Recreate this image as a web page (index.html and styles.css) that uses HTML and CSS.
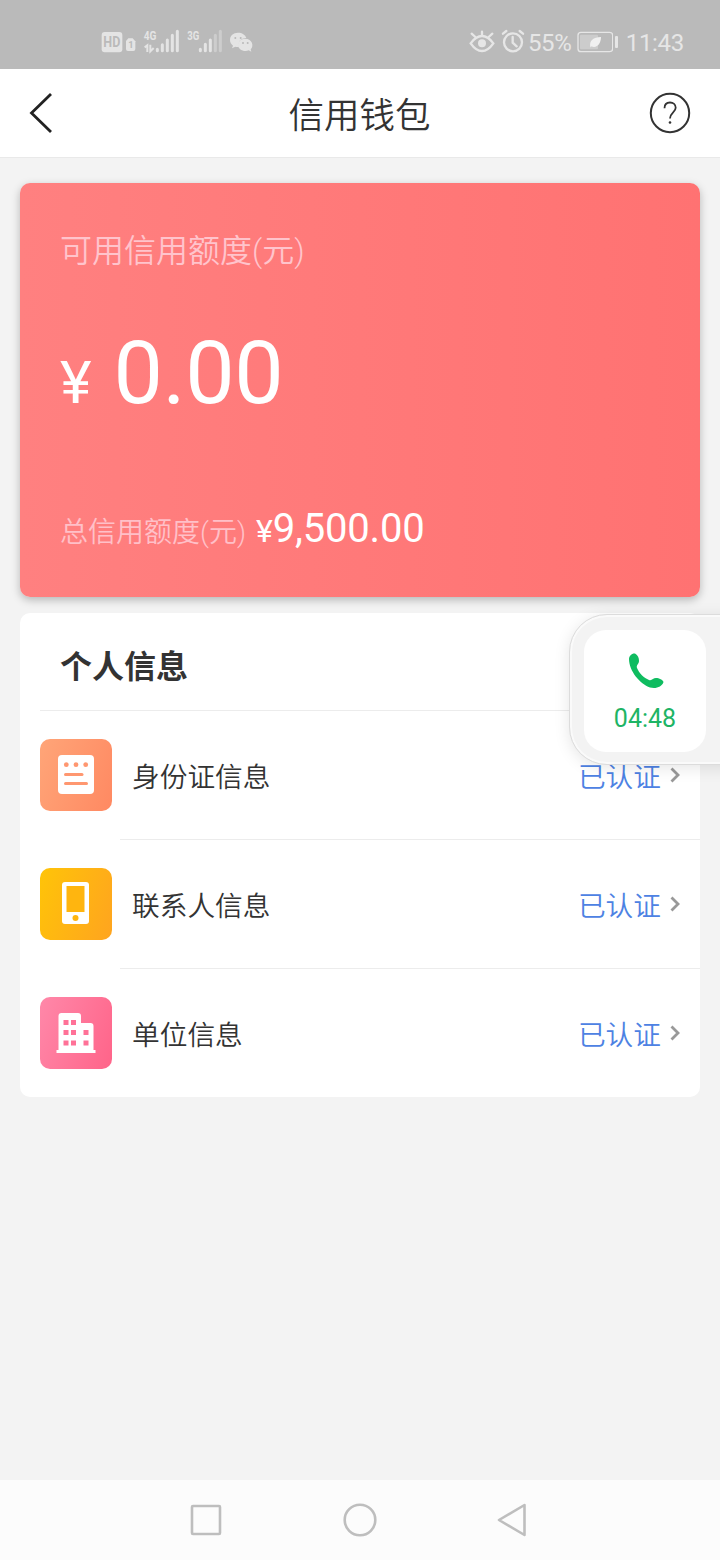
FILE: index.html
```html
<!DOCTYPE html>
<html lang="zh-CN">
<head>
<meta charset="utf-8">
<title>信用钱包</title>
<link rel="stylesheet" href="styles.css">
</head>
<body>
<div class="screen">
  <div class="status-bar">
    <svg class="status-network" width="180" height="45" viewBox="0 0 540 135">
      <rect x="35" y="36" width="62" height="61" rx="9" fill="#e4e4e4"/>
      <text x="40" y="81" class="badge-text" textLength="51" lengthAdjust="spacingAndGlyphs">HD</text>
      <path d="M115 55H128L136 64V87Q136 93 130 93H114Q108 93 108 87V63Z" fill="#e4e4e4"/>
      <text x="115" y="85" class="sim-text">1</text>
      <text x="161" y="60" class="net-text" textLength="38" lengthAdjust="spacingAndGlyphs">4G</text>
      <text x="292" y="60" class="net-text" textLength="36" lengthAdjust="spacingAndGlyphs">3G</text>
      <path d="M164 82L172 76V96M181 74V94L191 84" fill="none" stroke="#e4e4e4" stroke-width="6"/>
      <g stroke="#e4e4e4" stroke-width="9" stroke-linecap="round">
        <path d="M202 88V92M217 74V92M232 60V92M247 46V92M262 34V92M331 88V92M346 73V92M361 60V92"/>
        <path d="M376 46V92M391 34V92" stroke="#cdcdcd"/>
      </g>
      <path d="M444 38C430 38 420 47 420 60C420 67 424 73 429 77L426 85L436 80Q441 82 447 81C441 65 455 53 469 54C466 44 456 38 444 38Z" fill="#e4e4e4"/>
      <path d="M466 56C453 56 444 64 444 74C444 84 454 93 467 93Q472 93 476 91L484 95L482 88C493 77 486 56 466 56Z" fill="#e4e4e4"/>
      <g fill="#bababa"><circle cx="436" cy="54" r="3"/><circle cx="452" cy="54" r="3"/><circle cx="459" cy="69" r="3"/><circle cx="473" cy="69" r="3"/></g>
    </svg>
    <div class="status-right">
      <svg width="66" height="45" viewBox="0 0 198 135" fill="none" stroke="#e6e6e6" stroke-width="7" stroke-linecap="round">
        <path d="M32 70Q48 48 66 48T100 70Q84 93 66 93T32 70ZM66 45V35M46 51L35 41M86 51L97 41"/>
        <circle cx="66" cy="70" r="12" fill="#e6e6e6" stroke="none"/>
        <circle cx="159" cy="67" r="27"/><path d="M158 51V68L170 79M129 41L139 33M189 41L179 33"/>
      </svg>
      <span class="battery-value">55%</span>
      <svg width="42" height="45" viewBox="0 0 126 135">
        <rect x="21" y="37" width="104" height="58" rx="9" fill="none" stroke="#e6e6e6" stroke-width="4"/>
        <rect x="27" y="44" width="54" height="44" rx="3" fill="#cccccc"/>
        <path d="M58 82C54 61 67 52 90 51C90 70 78 86 61 79L75 64L57 83Z" fill="#f0f0f0"/>
      </svg>
      <span class="battery-cap"></span>
      <span class="clock">11:43</span>
    </div>
  </div>

  <header class="title-bar">
    <svg width="24" height="42" viewBox="0 0 24 42"><path d="M22 2L2.500 21L22 40" fill="none" stroke="#222" stroke-width="2.8"/></svg>
    <h1 class="title">信用钱包</h1>
    <svg width="42" height="42" viewBox="0 0 42 42" fill="none" stroke="#333" stroke-width="2">
      <circle cx="21" cy="21" r="19.2"/>
      <path d="M15.500 16.200C15.500 12.400 17.800 10.500 21 10.500S26.700 12.600 26.700 15.800C26.700 20.200 21 20.700 21 26.500" stroke-width="1.800"/><circle cx="21" cy="30.500" r="1.300" fill="#333" stroke="none"/>
    </svg>
  </header>

  <main class="content">
    <section class="credit-card">
      <div class="available-label">可用信用额度(元)</div>
      <div class="available-amount"><span class="available-yen">¥</span><span class="available-number">0.00</span></div>
      <div class="total"><span class="total-label">总信用额度(元)</span><span class="total-yen">¥</span><span class="total-number">9,500.00</span></div>
    </section>

    <section class="info-card">
      <h2 class="info-title">个人信息</h2>
      <div class="row">
        <div class="icon icon-id"><svg width="72" height="72" viewBox="0 0 72 72">
          <rect x="18" y="16" width="36" height="39" rx="4" fill="#fff"/>
          <g fill="#ff9770"><circle cx="26.3" cy="25.7" r="2.4"/><circle cx="36" cy="25.7" r="2.4"/><circle cx="45.7" cy="25.7" r="2.4"/><rect x="24" y="34" width="19.5" height="3" rx="1.5"/><rect x="24" y="43" width="24" height="3" rx="1.5"/></g>
        </svg></div>
        <div class="row-body"><span class="name">身份证信息</span><span class="state">已认证</span><svg class="arrow" width="12" height="18" viewBox="0 0 12 18"><path d="M2.5 2.5L9 9L2.5 15.5"/></svg></div>
      </div>
      <div class="row">
        <div class="icon icon-contact"><svg width="72" height="72" viewBox="0 0 72 72">
          <rect x="22" y="14" width="27" height="42" rx="3" fill="#fff"/><rect x="26.5" y="18" width="18" height="26" fill="#ffb50f"/><circle cx="35.5" cy="50" r="3" fill="#ffb50f"/>
        </svg></div>
        <div class="row-body"><span class="name">联系人信息</span><span class="state">已认证</span><svg class="arrow" width="12" height="18" viewBox="0 0 12 18"><path d="M2.5 2.5L9 9L2.5 15.5"/></svg></div>
      </div>
      <div class="row">
        <div class="icon icon-company"><svg width="72" height="72" viewBox="0 0 72 72">
          <path d="M18.5 53V19Q18.5 16 21.500 16H38Q41 16 41 19V26H50.500Q53.500 26 53.500 29V53H55.500V56H16.500V53Z" fill="#fff"/>
          <g fill="#ff7197"><path d="M23.500 23h5v5h-5zM31 23h5v5h-5zM23.500 33h5v5h-5zM31 33h5v5h-5zM43.500 33h5v5h-5zM23.500 43.500h5v5h-5zM31 43.500h5v5h-5zM43.500 43.500h5v5h-5z"/></g>
        </svg></div>
        <div class="row-body"><span class="name">单位信息</span><span class="state">已认证</span><svg class="arrow" width="12" height="18" viewBox="0 0 12 18"><path d="M2.5 2.5L9 9L2.5 15.5"/></svg></div>
      </div>
    </section>
  </main>

  <nav class="nav-bar">
    <svg width="34" height="36" viewBox="0 0 34 36"><rect x="3" y="4" width="28" height="28" rx="1"/></svg>
    <svg width="36" height="36" viewBox="0 0 36 36"><circle cx="19" cy="18" r="15.300"/></svg>
    <svg width="34" height="36" viewBox="0 0 34 36"><path d="M29.500 3V33L4 18Z" stroke-linejoin="round"/></svg>
  </nav>

  <div class="call-float">
    <div class="call-tile">
      <svg width="36" height="36" viewBox="0 0 36 36"><path d="M1 6C1 3 4 0 7 .5C10 2 11 5 11 8C11 11 8 12 9 15C11 20 16 25 21 27C24 28 25 25 28 25C31 25 35 27 35.500 29C34 34 28 36 22 34.500C12 31 1 18 1 6Z" fill="#0fbc60"/></svg>
      <span class="call-time">04:48</span>
    </div>
  </div>
</div>
</body>
</html>
```
FILE: styles.css
```css
* { box-sizing: border-box; }
body { margin: 0; font-family: Roboto, "Noto Sans CJK SC", sans-serif; color: #333; }
svg { display: block; flex: none; }
.screen { position: relative; width: 720px; height: 1560px; overflow: hidden; display: flex; flex-direction: column; background: #f3f3f3; }

.status-bar { height: 69px; flex: none; padding: 20px 36px 0 90px; display: flex; justify-content: space-between; background: #bababa; color: #e6e6e6; }
.badge-text { font: bold 42px Roboto, sans-serif; fill: #bababa; }
.sim-text { font: bold 28px Roboto, sans-serif; fill: #bababa; }
.net-text { font: bold 40px Roboto, sans-serif; fill: #e4e4e4; }
.status-right { display: flex; font-size: 24px; line-height: 46px; width: 224px; }
.battery-value { width: 44px; margin-left: 2px; letter-spacing: -0.4px; }
.battery-cap { width: 3px; height: 12px; margin: 16px 8px 0 2px; background: #e6e6e6; border-radius: 1px; }
.clock { white-space: nowrap; letter-spacing: -0.3px; }

.title-bar { height: 89px; flex: none; padding: 0 29px; display: flex; align-items: center; justify-content: space-between; background: #fff; border-bottom: 1px solid #e9e9e9; }
.title { margin: 6px 0 0 17px; font-size: 35.5px; font-weight: 350; line-height: 50px; color: #333; }

.content { flex: 1; padding: 25px 20px 0; }
.credit-card { height: 414px; padding: 44px 40px 0; border-radius: 10px; background: linear-gradient(90deg, #ff8080, #ff7272); box-shadow: 0 3px 8px rgba(0,0,0,.25); color: #fff; }
.available-label { font-size: 32px; line-height: 48px; font-weight: 350; color: #ffc4cc; }
.available-amount { display: flex; align-items: baseline; gap: 22px; margin-top: 46px; line-height: 104px; }
.available-yen { font-size: 60px; }
.available-number { font-size: 88px; letter-spacing: -0.5px; }
.total { display: flex; align-items: baseline; margin-top: 70px; line-height: 48px; }
.total-label { font-size: 28px; font-weight: 350; color: #ffc0c8; width: 196px; white-space: nowrap; }
.total-yen { font-size: 32px; }
.total-number { font-size: 40px; letter-spacing: -0.2px; }

.info-card { margin-top: 16px; height: 484px; background: #fff; border-radius: 10px; }
.info-title { margin: 0 0 0 20px; height: 98px; padding: 5px 20px 0; font-size: 32px; line-height: 98px; font-weight: 700; border-bottom: 1px solid #ececec; }
.row { display: flex; height: 129px; padding-left: 20px; align-items: center; }
.icon { width: 72px; height: 72px; border-radius: 10px; flex: none; margin-bottom: 1px; }
.icon-id { background: linear-gradient(110deg, #ffa578, #ff8962); }
.icon-contact { background: linear-gradient(110deg, #ffc408, #ffa41f); }
.icon-company { background: linear-gradient(110deg, #ff88a9, #ff6489); }
.row-body { flex: 1; height: 129px; margin-left: 8px; padding: 0 19px 1px 12px; display: flex; align-items: center; border-bottom: 1px solid #ececec; font-size: 27.7px; font-weight: 350; }
.row:last-child .row-body { border-bottom: 0; }
.name { flex: 1; }
.state { color: #4d82e3; }
.arrow { margin: 0 0 0 8px; fill: none; stroke: #999; stroke-width: 2.8; }

.nav-bar { height: 80px; flex: none; padding: 0 191px 0 189px; display: flex; align-items: center; justify-content: space-between; background: #fcfcfc; }
.nav-bar svg { fill: none; stroke: #bebebe; stroke-width: 2.6; }

.call-float { position: absolute; left: 569px; top: 614px; width: 170px; height: 151px; padding: 15px 0 0 14px; background: #f3f3f3; border: 1px solid #dcdcdc; border-radius: 38px 0 0 38px; box-shadow: inset 0 0 0 2px #fafafa, 0 3px 16px rgba(0,0,0,.1); }
.call-tile { width: 122px; height: 122px; padding-top: 23px; display: flex; flex-direction: column; align-items: center; border-radius: 22px; background: #fff; }
.call-tile svg { margin-left: 2px; }
.call-time { margin-top: 15px; font-size: 25px; line-height: 30px; color: #1eb465; }
```
